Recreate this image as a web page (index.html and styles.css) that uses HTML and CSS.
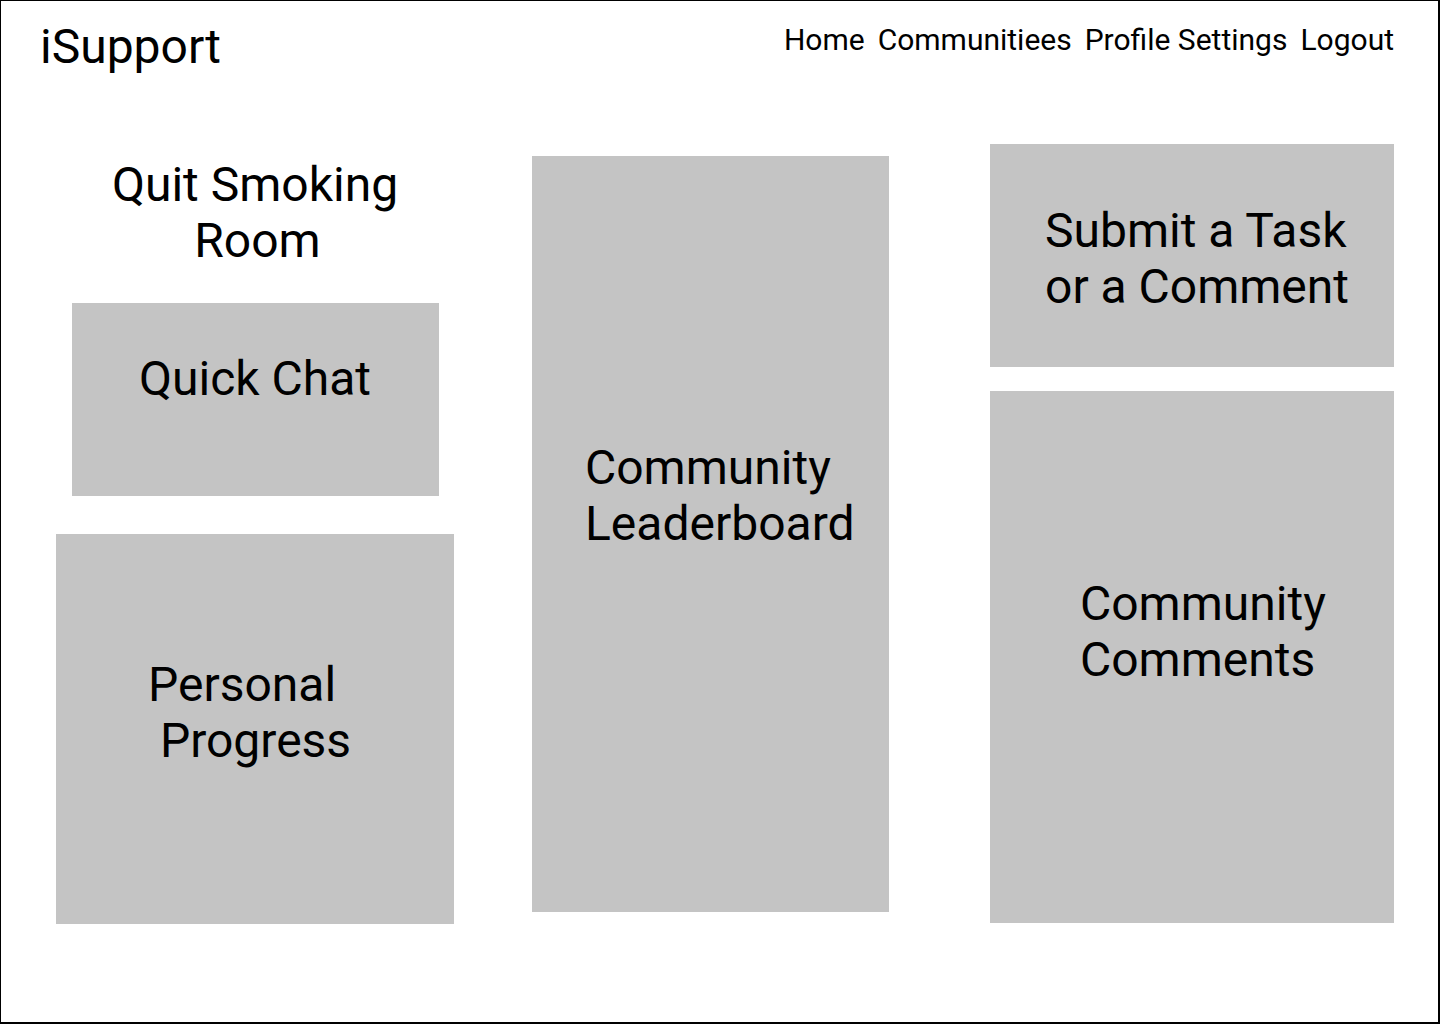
FILE: index.html
```html
<!DOCTYPE html>
<html lang="en">
<head>
    <meta charset="UTF-8">
    <meta name="viewport" content="width=device-width, initial-scale=1.0">
    <title>iSupport - Quit Smoking Room</title>
    <link rel="stylesheet" href="styles.css">
</head>
<body>
    <div class="page">
        <header class="header">
            <div class="logo">iSupport</div>
            <nav class="nav">
                <a href="#">Home</a>
                <a href="#">Communitiees</a>
                <a href="#">Profile Settings</a>
                <a href="#">Logout</a>
            </nav>
        </header>

        <main class="main">
            <div class="col col-left">
                <h1 class="room-title">Quit Smoking<br><span class="room-word">Room</span></h1>
                <div class="panel quick-chat">Quick Chat</div>
                <div class="panel progress">Personal<br>&nbsp;Progress</div>
            </div>

            <div class="col col-middle">
                <div class="panel leaderboard">Community<br>Leaderboard</div>
            </div>

            <div class="col col-right">
                <div class="panel submit">Submit a Task<br>or a Comment</div>
                <div class="panel comments">Community<br>Comments</div>
            </div>
        </main>
    </div>
</body>
</html>
```

FILE: styles.css
```css
* {
    box-sizing: border-box;
}
body {
    margin: 0;
    font-family: Roboto, "Liberation Sans", sans-serif;
    color: #000;
    background: #fff;
}
.page {
    width: 1440px;
    height: 1024px;
    border: 1px solid #000;
    border-right-width: 2px;
    border-bottom-width: 2px;
    background: #fff;
}
.header {
    display: flex;
    justify-content: space-between;
    align-items: flex-start;
    padding: 18px 44px 0 39px;
}
.logo {
    font-size: 48px;
    line-height: 56px;
}
.nav {
    display: flex;
    gap: 13px;
    padding-top: 3px;
}
.nav a {
    color: #000;
    text-decoration: none;
    font-size: 30px;
    line-height: 35px;
}
.main {
    display: flex;
    align-items: flex-start;
    padding: 69px 0 0 55px;
}
.col {
    display: flex;
    flex-direction: column;
}
.col-left {
    width: 398px;
    margin-top: 13px;
    align-items: center;
}
.col-middle {
    width: 357px;
    margin-left: 78px;
    margin-top: 12px;
}
.col-right {
    width: 404px;
    margin-left: 101px;
    gap: 24px;
}
.room-title {
    margin: 0;
    font-size: 48px;
    font-weight: normal;
    line-height: 56px;
    text-align: center;
}
.room-word {
    padding-left: 5px;
}
.panel {
    background-color: #c4c4c4;
    font-size: 48px;
    line-height: 56px;
}
.quick-chat {
    width: 367px;
    height: 193px;
    margin-top: 34px;
    padding-top: 48px;
    text-align: center;
}
.progress {
    width: 398px;
    height: 390px;
    margin-top: 38px;
    padding: 123px 0 0 92px;
}
.leaderboard {
    height: 756px;
    padding: 284px 0 0 53px;
}
.submit {
    height: 223px;
    padding: 59px 0 0 55px;
}
.comments {
    height: 532px;
    padding: 185px 0 0 90px;
}
```
